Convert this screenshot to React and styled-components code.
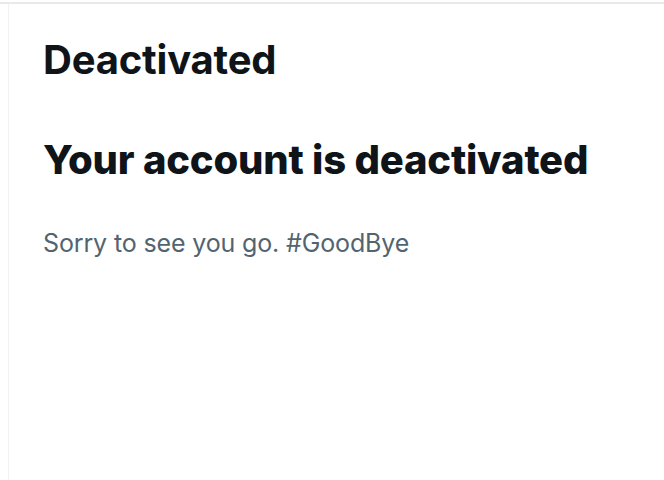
import React from 'react';
import styled, { createGlobalStyle } from 'styled-components';

const GlobalStyle = createGlobalStyle`
  html, body {
    margin: 0;
    padding: 0;
    background: #ffffff;
  }

  body {
    font-family: Inter, "Liberation Sans", sans-serif;
    color: #0f1419;
  }
`;

const Page = styled.div`
  height: 480px;
  padding-top: 2px;
  box-sizing: border-box;
  overflow: hidden;
`;

const TopRule = styled.div`
  height: 2px;
  background: #e9e9e9;
`;

const Column = styled.main`
  margin-left: 8px;
  height: 100%;
  border-left: 1px solid #eff3f4;
  padding: 0 34px;
`;

const Title = styled.h1`
  margin: 0;
  padding-top: 32px;
  font-size: 40px;
  line-height: 48px;
  font-weight: 700;
  letter-spacing: -0.2px;
`;

const Headline = styled.h2`
  margin: 0;
  padding-top: 52px;
  font-size: 40px;
  line-height: 48px;
  font-weight: 800;
  letter-spacing: -0.2px;
`;

const Message = styled.p`
  margin: 0;
  padding-top: 44px;
  font-size: 25px;
  line-height: 30px;
  font-weight: 400;
  letter-spacing: -0.14px;
  color: #536471;
`;

const App = () => (
  <>
    <GlobalStyle />
    <Page>
      <TopRule />
      <Column>
        <Title>Deactivated</Title>
        <Headline>Your account is deactivated</Headline>
        <Message>Sorry to see you go. #GoodBye</Message>
      </Column>
    </Page>
  </>
);

export default App;
